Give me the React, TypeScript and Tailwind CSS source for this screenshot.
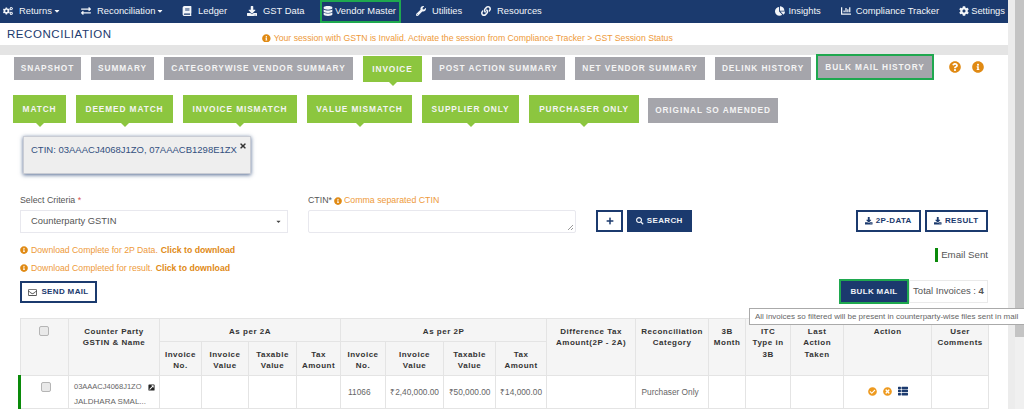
import { Fragment } from 'react';
import {
  FaCogs, FaCaretDown, FaExchangeAlt, FaBook, FaDownload, FaDatabase, FaWrench, FaLink, FaChartPie,
  FaChartBar, FaCog, FaInfoCircle, FaQuestionCircle, FaTimes, FaPlus, FaSearch, FaRegEnvelope,
  FaCheckCircle, FaTimesCircle, FaThList, FaExternalLinkSquareAlt,
} from 'react-icons/fa';

const topTabs = [
  { label: 'SNAPSHOT', w: 'w-[67px]' },
  { label: 'SUMMARY', w: 'w-[63px]' },
  { label: 'CATEGORYWISE VENDOR SUMMARY', w: 'w-[189px]' },
  { label: 'INVOICE', w: 'w-[59px]', active: true },
  { label: 'POST ACTION SUMMARY', w: 'w-[133px]' },
  { label: 'NET VENDOR SUMMARY', w: 'w-[130px]' },
  { label: 'DELINK HISTORY', w: 'w-[96px]' },
];

const subTabs = [
  { label: 'MATCH', w: 'w-[53px]' },
  { label: 'DEEMED MATCH', w: 'w-[97px]' },
  { label: 'INVOICE MISMATCH', w: 'w-[114px]' },
  { label: 'VALUE MISMATCH', w: 'w-[105px]' },
  { label: 'SUPPLIER ONLY', w: 'w-[97px]' },
  { label: 'PURCHASER ONLY', w: 'w-[110px]' },
];

function Arrow() {
  return (
    <span className="absolute left-1/2 top-full -ml-[4px] h-0 w-0 border-x-[4px] border-t-[4px] border-x-transparent border-t-[#8cc63f]" />
  );
}

function NavItem({ icon, label, caret, className }: { icon: React.ReactNode; label: string; caret?: boolean; className?: string }) {
  return (
    <div className={`flex items-center whitespace-nowrap text-[9.4px] text-[#f2f5f9] ${className ?? ''}`}>
      <span className="w-[16px] shrink-0 text-[10px]">{icon}</span>
      <span>{label}</span>
      {caret && <FaCaretDown className="ml-[1px] text-[8px]" />}
    </div>
  );
}

function Th({ children, rowSpan, colSpan }: { children?: React.ReactNode; rowSpan?: number; colSpan?: number }) {
  return (
    <th
      rowSpan={rowSpan}
      colSpan={colSpan}
      className="border border-[#e4e4e4] px-[2px] pt-[7px] align-top text-[8px] leading-[11.4px] font-bold tracking-[0.5px] text-[#333]"
    >
      {children}
    </th>
  );
}

function Check({ className }: { className?: string }) {
  return <span className={`mx-auto block h-[10px] w-[10px] rounded-[2px] border border-[#b5b5b5] bg-[#e9e9e9] ${className ?? ''}`} />;
}

export default function App() {
  return (
    <div className="relative h-[409px] w-[1024px] overflow-hidden bg-white [font-family:'Liberation_Sans',Arial,sans-serif]">
      <div className="flex h-full">
        <div className="w-[1008px] shrink-0">
          {/* Barra superior */}
          <nav className="flex h-[23px] w-[1015px] items-center bg-[#1b3a6e] pl-[3px]">
            <NavItem icon={<FaCogs />} label="Returns" className="w-[78px]" caret />
            <NavItem icon={<FaExchangeAlt />} label="Reconciliation" className="w-[101px]" caret />
            <NavItem icon={<FaBook />} label="Ledger" className="w-[65px]" />
            <NavItem icon={<FaDownload />} label="GST Data" className="w-[73px]" />
            <div className="w-[81px] border-[2px] border-[#1fa84f] py-[2px] pl-[1px]">
              <NavItem icon={<FaDatabase />} label="Vendor Master" className="[&>span:first-child]:w-[12px]" />
            </div>
            <NavItem icon={<FaWrench />} label="Utilities" className="ml-[15px] w-[65px]" />
            <NavItem icon={<FaLink />} label="Resources" />
            <NavItem icon={<FaChartPie />} label="Insights" className="ml-auto [&>span:first-child]:w-[13px]" />
            <NavItem icon={<FaChartBar />} label="Compliance Tracker" className="ml-[20px] [&>span:first-child]:w-[15px]" />
            <NavItem icon={<FaCog />} label="Settings" className="mr-[10px] ml-[20px] [&>span:first-child]:w-[12px]" />
          </nav>

          {/* Titulo */}
          <div className="relative h-[22px] px-[7px] pt-[4px]">
            <h1 className="text-[11.5px] leading-[15px] tracking-[0.55px] text-[#1b3a6e]">RECONCILIATION</h1>
            <p className="absolute top-[9px] left-[262px] flex items-center gap-[3px] text-[8.7px] leading-[12px] whitespace-nowrap text-[#ee9a3a]">
              <FaInfoCircle className="text-[#e08a14]" />
              Your session with GSTN is Invalid. Activate the session from Compliance Tracker &gt; GST Session Status
            </p>
          </div>
          <div className="h-[10px] bg-[#e4e4e4]" />

          {/* Abas */}
          <div className="mt-[1px] flex h-[25px] items-start gap-[10px] pl-[14px]">
            {topTabs.map((t) => (
              <div
                key={t.label}
                className={`relative flex items-center justify-center text-[8.3px] font-bold tracking-[0.9px] whitespace-nowrap text-[#f4f4f4] ${t.w} ${
                  t.active ? 'h-[26px] bg-[#8cc63f]' : 'mt-[1px] h-[23px] bg-[#a5a5ab]'
                }`}
              >
                {t.label}
                {t.active && <Arrow />}
              </div>
            ))}
            <div className="-mt-[2px] -ml-[5px] flex h-[26px] w-[118px] items-center justify-center border-[2px] border-[#1fa84f] bg-[#a5a5ab] text-[8.3px] font-bold tracking-[0.9px] whitespace-nowrap text-[#f4f4f4]">
              BULK MAIL HISTORY
            </div>
            <FaQuestionCircle className="mt-[5px] ml-[5px] text-[12px] text-[#e08a14]" />
            <FaInfoCircle className="mt-[5px] ml-[1px] text-[12px] text-[#e08a14]" />
          </div>

          <div className="mt-[14px] flex h-[28px] items-start gap-[10px] pl-[13px]">
            {subTabs.map((t) => (
              <div
                key={t.label}
                className={`relative flex h-[28px] items-center justify-center bg-[#8cc63f] text-[8.3px] font-bold tracking-[0.9px] whitespace-nowrap text-[#f4f4f4] ${t.w}`}
              >
                {t.label}
                <Arrow />
              </div>
            ))}
            <div className="mt-[3px] -ml-[1px] flex h-[25px] w-[130px] items-center justify-center bg-[#a5a5ab] text-[8.3px] font-bold tracking-[0.9px] whitespace-nowrap text-[#f4f4f4]">
              ORIGINAL SO AMENDED
            </div>
          </div>

          {/* Filtro aplicado */}
          <div className="mt-[13px] ml-[23px] flex h-[38px] w-[228px] items-start justify-between border border-[#c9ccd4] bg-[#eeeeee] pt-[6px] pr-[3px] pl-[7px] shadow-[0_1px_4px_rgba(27,58,110,0.75)]">
            <span className="text-[9.5px] leading-[14px] whitespace-nowrap text-[#33507f]">CTIN: 03AAACJ4068J1ZO, 07AAACB1298E1ZX</span>
            <FaTimes className="-mt-[1px] text-[8px] text-[#333]" />
          </div>

          {/* Formulario */}
          <div className="mt-[19px] flex pl-[20px]">
            <div className="w-[268px]">
              <label className="block text-[8.8px] leading-[15px] text-[#555]">
                Select Criteria <span className="text-[#d9534f]">*</span>
              </label>
              <div className="mt-[2px] flex h-[23px] items-center justify-between border border-[#e8e8ee] pr-[5px] pl-[10px] text-[9.4px] text-[#555]">
                Counterparty GSTIN
                <FaCaretDown className="text-[7px] text-[#444]" />
              </div>
            </div>
            <div className="ml-[20px] w-[268px]">
              <label className="flex items-center gap-[2px] text-[8.8px] leading-[15px] text-[#555]">
                CTIN*
                <FaInfoCircle className="text-[8px] text-[#e08a14]" />
                <span className="text-[#ee9a3a]">Comma separated CTIN</span>
              </label>
              <div className="relative mt-[2px] h-[23px] rounded-[2px] border border-[#e8e8ee]">
                <span className="absolute right-[2px] bottom-[2px] h-[5px] w-[5px] bg-[linear-gradient(135deg,transparent_50%,#999_50%,#999_60%,transparent_60%,transparent_75%,#999_75%,#999_85%,transparent_85%)]" />
              </div>
            </div>
            <div className="mt-[17px] ml-[20px] flex h-[22px] items-start">
              <button className="flex h-[22px] w-[27px] items-center justify-center border-[2px] border-[#1b3a6e] bg-white text-[8px] text-[#1b3a6e]">
                <FaPlus />
              </button>
              <button className="ml-[4px] flex h-[22px] w-[65px] items-center justify-center gap-[3px] bg-[#1b3a6e] text-[8px] font-bold tracking-[0.35px] text-[#eef1f6]">
                <FaSearch className="text-[7.5px]" /> SEARCH
              </button>
            </div>
            <div className="mt-[17px] ml-[164px] flex gap-[4px]">
              {['2P-DATA', 'RESULT'].map((b) => (
                <button
                  key={b}
                  className={`flex h-[22px] items-center justify-center gap-[3px] border-[2px] border-[#1b3a6e] bg-white text-[8px] font-bold tracking-[0.35px] text-[#1b3a6e] ${
                    b === 'RESULT' ? 'w-[63px]' : 'w-[65px]'
                  }`}
                >
                  <FaDownload className="text-[7.5px]" /> {b}
                </button>
              ))}
            </div>
          </div>

          {/* Avisos e acoes */}
          <div className="relative flex justify-between pr-[20px] pl-[20px]">
            <div className="pt-[8px]">
              <p className="flex items-center gap-[3px] text-[8.7px] leading-[18px] text-[#ee9a3a]">
                <FaInfoCircle className="text-[8px] text-[#e08a14]" />
                Download Complete for 2P Data. <b className="text-[#e08a14]">Click to download</b>
              </p>
              <p className="flex items-center gap-[3px] text-[8.7px] leading-[18px] text-[#ee9a3a]">
                <FaInfoCircle className="text-[8px] text-[#e08a14]" />
                Download Completed for result. <b className="text-[#e08a14]">Click to download</b>
              </p>
              <button className="mt-[4px] flex h-[22px] w-[77px] items-center justify-center gap-[4px] border-[2px] border-[#1b3a6e] bg-white text-[8px] font-bold tracking-[0.35px] text-[#1b3a6e]">
                <FaRegEnvelope className="text-[9px] text-[#555]" /> SEND MAIL
              </button>
            </div>
            <div className="flex flex-col items-end pt-[15px]">
              <div className="flex h-[14px] items-center gap-[3px] text-[9.7px] text-[#555]">
                <span className="h-[14px] w-[3px] bg-[#0a8a0a]" />
                Email Sent
              </div>
              <div className="mt-[17px] flex items-center">
                <button className="h-[25px] w-[70px] border-[2px] border-[#1fa84f] bg-[#1b3a6e] text-[8px] font-bold tracking-[0.35px] text-[#eef1f6]">
                  BULK MAIL
                </button>
                <div className="flex h-[23px] w-[79px] items-center justify-center border border-[#eaeaea] text-[9.5px] text-[#555]">
                  Total Invoices :&nbsp;<b>4</b>
                </div>
              </div>
            </div>
          </div>

          {/* Tabela */}
          <div className="relative mt-[14px] ml-[20px]">
            <span className="absolute top-[57px] -left-[2px] h-[40px] w-[3px] bg-[#0a8a0a]" />
            <table className="w-[968px] table-fixed border-collapse">
              <colgroup>
                {[48, 91, 42, 47, 48, 44, 45, 58, 52, 51, 89, 73, 37, 45, 53, 88, 57].map((w, i) => (
                  <col key={i} style={{ width: w }} />
                ))}
              </colgroup>
              <thead className="bg-[#f5f5f5]">
                <tr className="h-[23px]">
                  <th rowSpan={2} className="border border-[#e4e4e4] pt-[7px] pr-[2px] align-top">
                    <Check />
                  </th>
                  <Th rowSpan={2}>Counter Party<br />GSTIN &amp; Name</Th>
                  <Th colSpan={4}>As per 2A</Th>
                  <Th colSpan={4}>As per 2P</Th>
                  <Th rowSpan={2}>Difference Tax<br />Amount(2P - 2A)</Th>
                  <Th rowSpan={2}>Reconciliation<br />Category</Th>
                  <Th rowSpan={2}>3B<br />Month</Th>
                  <Th rowSpan={2}>ITC<br />Type in<br />3B</Th>
                  <Th rowSpan={2}>Last<br />Action<br />Taken</Th>
                  <Th rowSpan={2}>Action</Th>
                  <Th rowSpan={2}>User<br />Comments</Th>
                </tr>
                <tr className="h-[34px]">
                  {[0, 1].map((g) => (
                    <Fragment key={g}>
                      <Th>Invoice<br />No.</Th>
                      <Th>Invoice<br />Value</Th>
                      <Th>Taxable<br />Value</Th>
                      <Th>Tax<br />Amount</Th>
                    </Fragment>
                  ))}
                </tr>
              </thead>
              <tbody className="text-center text-[8.3px] text-[#666]">
                <tr className="h-[33px]">
                  <td className="border border-[#e4e4e4] pl-[3px] align-top">
                    <Check className="mt-[6px]" />
                  </td>
                  <td className="border border-[#e4e4e4] pl-[5px] text-left align-top">
                    <div className="mt-[6px] flex items-center gap-[6px] text-[7.5px] leading-[10px]">
                      03AAACJ4068J1ZO
                      <FaExternalLinkSquareAlt className="text-[7px] text-[#222]" />
                    </div>
                    <div className="mt-[5px] text-[8px] leading-[10px]">JALDHARA SMAL...</div>
                  </td>
                  <td className="border border-[#e4e4e4]" />
                  <td className="border border-[#e4e4e4]" />
                  <td className="border border-[#e4e4e4]" />
                  <td className="border border-[#e4e4e4]" />
                  <td className="border border-[#e4e4e4] pl-[7px] text-left">11066</td>
                  <td className="border border-[#e4e4e4]">₹2,40,000.00</td>
                  <td className="border border-[#e4e4e4]">₹50,000.00</td>
                  <td className="border border-[#e4e4e4]">₹14,000.00</td>
                  <td className="border border-[#e4e4e4]" />
                  <td className="border border-[#e4e4e4] pr-[4px]">Purchaser Only</td>
                  <td className="border border-[#e4e4e4]" />
                  <td className="border border-[#e4e4e4]" />
                  <td className="border border-[#e4e4e4]" />
                  <td className="border border-[#e4e4e4]">
                    <div className="-mt-[2px] flex items-center justify-center gap-[6px] text-[9px]">
                      <FaCheckCircle className="text-[#ee9a1f]" />
                      <FaTimesCircle className="text-[#ee9a1f]" />
                      <FaThList className="text-[10px] text-[#1b3a6e]" />
                    </div>
                  </td>
                  <td className="border border-[#e4e4e4]" />
                </tr>
              </tbody>
            </table>
          </div>
        </div>
        <div className="flex grow">
          <div className="w-[7px] bg-[#ececec]" />
          <div className="flex grow flex-col">
            <div className="h-[337px] bg-[#c4c4c4]" />
            <div className="grow bg-[#f0f0f0]" />
          </div>
        </div>
      </div>

      {/* Tooltip do Bulk Mail */}
      <div className="absolute top-[308px] left-[749px] flex h-[17px] w-[280px] items-center border border-[#aaa] bg-white pl-[5px] text-[8px] whitespace-nowrap text-[#666]">
        All invoices so filtered will be present in counterparty-wise files sent in mail
      </div>
    </div>
  );
}
